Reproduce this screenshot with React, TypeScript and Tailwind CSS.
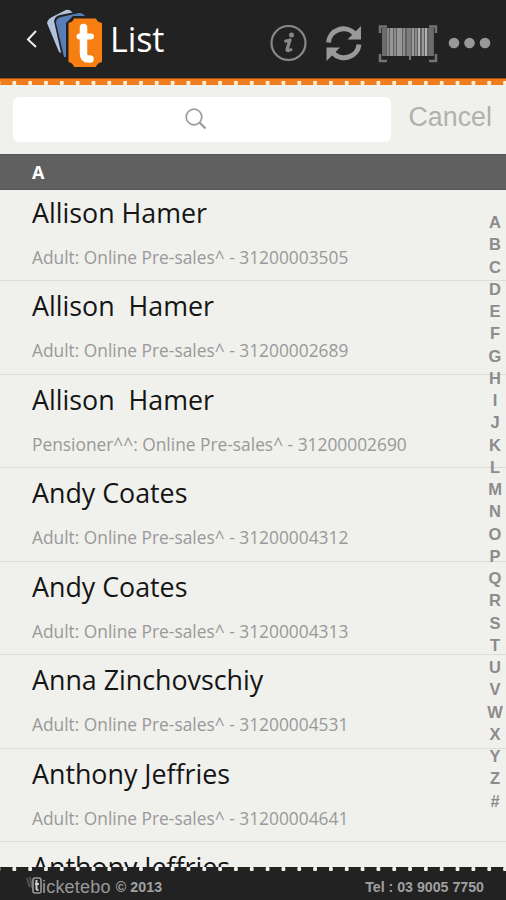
const guests = [
  { name: "Allison Hamer", ticket: "Adult: Online Pre-sales^ - 31200003505" },
  { name: "Allison  Hamer", ticket: "Adult: Online Pre-sales^ - 31200002689" },
  { name: "Allison  Hamer", ticket: "Pensioner^^: Online Pre-sales^ - 31200002690" },
  { name: "Andy Coates", ticket: "Adult: Online Pre-sales^ - 31200004312" },
  { name: "Andy Coates", ticket: "Adult: Online Pre-sales^ - 31200004313" },
  { name: "Anna Zinchovschiy", ticket: "Adult: Online Pre-sales^ - 31200004531" },
  { name: "Anthony Jeffries", ticket: "Adult: Online Pre-sales^ - 31200004641" },
  { name: "Anthony Jeffries", ticket: "" },
];

const letters = "ABCDEFGHIJKLMNOPQRSTUVWXYZ#".split("");

// x, width, shade of each bar in the scan icon
const bars: [number, number, string][] = [
  [4, 4, "#6c6c6c"], [9, 2, "#888"], [12, 3, "#969696"], [16, 2, "#8a8a8a"], [19, 5, "#969696"],
  [25, 2, "#8a8a8a"], [29, 4, "#7c7c7c"], [34, 2, "#999"], [37, 2, "#888"], [40, 2, "#b0b0b0"],
  [44, 2, "#999"], [47, 2, "#b0b0b0"], [51, 4, "#6c6c6c"],
];

function Perforation({ color }: { color: string }) {
  return (
    <svg className="block h-[4px] w-full" aria-hidden="true">
      {Array.from({ length: 33 }, (_, i) => (
        <rect key={i} x={12.4 + (i - 1) * 15.83} y="0" width="3.8" height="4" rx="1" fill={color} />
      ))}
    </svg>
  );
}

function Logo() {
  return (
    <svg className="h-[62px] w-[58px]" viewBox="0 0 58 62" fill="none">
      <path d="M1 16 Q2 12 6 10 L20 3 Q24 2 27 6 L30 12 L17 47 L13 45 Z" fill="#b3c2db" />
      <path d="M8 14 Q9 9 14 8 L34 4 Q40 4 43 11 L24 53 L16 50 Z" fill="#222" />
      <path d="M10 16 Q10 11 15 10 L33 6 Q38 6 40 11 L24 50 L18 50 Z" fill="#587eb6" />
      <path d="M27 9 H50 L58 17 V62 H27 L20 55 V16 Z" fill="#222" />
      <path d="M28 11.5 H50 Q51 15 56 16 V55 Q51 56 50 60 H28 Q27 56 22.5 55 V16 Q27 15 28 11.5 Z" fill="#f77f12" />
      <path d="M37.5 20.5 V46 Q37.5 52 42.5 52 H44" stroke="#fff" strokeWidth="7.5" strokeLinecap="round" />
      <path d="M33.5 29.5 H45" stroke="#fff" strokeWidth="6" strokeLinecap="round" />
    </svg>
  );
}

function Header() {
  return (
    <header className="flex h-[78px] shrink-0 items-start bg-[#222]">
      <svg className="mt-[29px] ml-[25px] h-[20px] w-[13px]" viewBox="0 0 13 20" fill="none">
        <path d="M11 2 L3 10.5 L11 18" stroke="#eee" strokeWidth="2" />
      </svg>
      <div className="mt-[7px] ml-[8px]">
        <Logo />
      </div>
      <h1 className="mt-[17px] ml-[6px] w-[60px] text-[34px] leading-[45px] tracking-[-0.1px] text-white">List</h1>
      <svg className="mt-[24px] ml-[100px] h-[38px] w-[38px]" viewBox="0 0 38 38" fill="none">
        <circle cx="18.5" cy="19" r="17" stroke="#888" strokeWidth="2.2" />
        <circle cx="21.5" cy="11" r="2.5" fill="#888" />
        <path d="M14.5 17.5 L20 16 L17 25.5 Q17 28 22 25" stroke="#888" strokeWidth="3.2" strokeLinejoin="round" />
      </svg>
      <svg className="mt-[24px] ml-[17px] h-[38px] w-[38px]" viewBox="0 0 38 38" fill="none">
        <path d="M3.5 18.5 A15 14.5 0 0 1 30 10" stroke="#999" strokeWidth="5" />
        <path d="M36 2 V15.5 H22.5 L28 10 Z" fill="#999" />
        <path d="M34 20.5 A15 14.5 0 0 1 8 29" stroke="#999" strokeWidth="5" />
        <path d="M1.5 37 V23.5 H15 L9.5 29 Z" fill="#999" />
      </svg>
      <svg className="mt-[24px] ml-[15px] h-[40px] w-[60px]" viewBox="0 0 60 40" fill="none">
        <path d="M2 9 V2.5 H9 M51 2.5 H58 V9 M2 30 V37 H9 M51 37 H58 V30" stroke="#747474" strokeWidth="2.5" />
        <rect x="4" y="4" width="52" height="28" fill="#626262" />
        {bars.map(([x, w, fill]) => (
          <rect key={x} x={x} y="4" width={w} height="28" fill={fill} />
        ))}
        <path d="M32 32 V36" stroke="#777" strokeWidth="2" />
      </svg>
      <svg className="mt-[37px] ml-[10px] h-[12px] w-[43px]" viewBox="0 0 43 12" fill="#999">
        <circle cx="6" cy="6" r="5.3" />
        <circle cx="21.5" cy="6" r="5.3" />
        <circle cx="37" cy="6" r="5.3" />
      </svg>
    </header>
  );
}

export default function App() {
  return (
    <div className="relative flex h-[900px] w-[506px] flex-col overflow-hidden bg-[#f0f0ed] font-['Open_Sans',sans-serif]">
      <Header />
      <div className="h-[7px] shrink-0 border-t border-[#a94f0c] bg-[#ef7d1d] pt-[2px]">
        <Perforation color="#fff3dd" />
      </div>

      <div className="flex h-[69px] shrink-0 items-start pt-[12px] pl-[13px]">
        <div className="flex h-[45px] w-[378px] items-center justify-center rounded-md bg-white">
          <svg className="mb-[1px] ml-[-12px] h-[22px] w-[22px]" viewBox="0 0 22 22" fill="none" stroke="#9a9a9a">
            <circle cx="9" cy="9" r="7.8" strokeWidth="1.7" />
            <path d="M14.5 14.5 L20.5 20.5" strokeWidth="2.2" />
          </svg>
        </div>
        <button className="mt-[4px] ml-[17.5px] font-['Liberation_Sans',sans-serif] text-[26.8px] leading-[32px] text-[#b0b0ae]">
          Cancel
        </button>
      </div>

      <div className="flex h-[36px] shrink-0 items-center border-y border-y-[#555] bg-[#606060] pl-[32px] text-[18px] font-bold text-white">
        A
      </div>

      <main className="h-[677px] shrink-0 overflow-hidden">
        <ul className="mt-[-2.5px]">
          {guests.map((guest, i) => (
            <li key={i} className="h-[93.5px] border-b border-[#dcdcda] pl-[32px] whitespace-pre">
              <p className="pt-[7px] text-[26.8px] leading-[36px] text-[#151515]">{guest.name}</p>
              {guest.ticket && <p className="mt-[13px] text-[17.35px] leading-[26px] text-[#999]">{guest.ticket}</p>}
            </li>
          ))}
        </ul>
      </main>

      <nav className="absolute top-[211px] right-0 flex w-[22px] flex-col items-center font-['Liberation_Sans',sans-serif] text-[16.5px] leading-[22.25px] font-bold text-[#8c8c8c]">
        {letters.map((letter) => (
          <span key={letter}>{letter}</span>
        ))}
      </nav>

      <footer className="h-[33px] shrink-0 bg-[#222]">
        <Perforation color="#f0f0ed" />
        <div className="flex justify-between pt-[5px] pr-[22px] pl-[26px] font-['Liberation_Sans',sans-serif] text-[14.2px] leading-[22px] font-bold text-[#a0a0a0]">
          <span className="flex">
            <svg className="h-[19px] w-[16px]" viewBox="0 0 16 19" fill="none">
              <path d="M1 2 L3.5 11 M4 1 L6 12" stroke="#555" strokeWidth="1.8" />
              <rect x="7" y="2" width="8" height="15" rx="2" stroke="#999" strokeWidth="1.6" />
              <path d="M10.5 4 V12.5 Q10.5 14 12.5 14 M9 8 H13" stroke="#ccc" strokeWidth="2" />
            </svg>
            <span className="text-[18px] font-normal tracking-[0.2px] text-[#999]">icketebo</span>
            <span className="ml-[5px] tracking-[0.1px]">© 2013</span>
          </span>
          <span>Tel : 03 9005 7750</span>
        </div>
      </footer>
    </div>
  );
}
